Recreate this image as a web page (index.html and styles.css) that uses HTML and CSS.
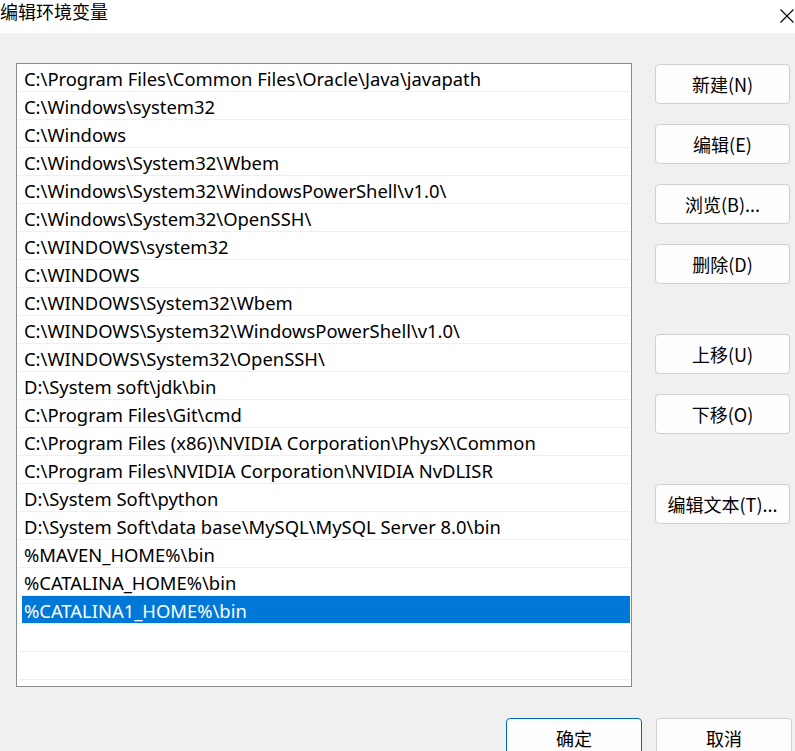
FILE: index.html
```html
<!DOCTYPE html>
<html lang="zh-CN">
<head>
    <meta charset="UTF-8">
    <title>编辑环境变量</title>
    <link rel="stylesheet" href="styles.css">
</head>
<body>
    <div class="titlebar">
        <span class="title">编辑环境变量</span>
        <span class="close">
            <svg width="14" height="14" viewBox="0 0 14 14"><path d="M0.5 0.5L13.5 13.5M13.5 0.5L0.5 13.5" stroke="#000" stroke-width="1.1" fill="none"/></svg>
        </span>
    </div>

    <div class="main">
        <!-- 路径列表 -->
        <div class="list">
            <div class="row"><div class="cell">C:\Program Files\Common Files\Oracle\Java\javapath</div></div>
            <div class="row"><div class="cell">C:\Windows\system32</div></div>
            <div class="row"><div class="cell">C:\Windows</div></div>
            <div class="row"><div class="cell">C:\Windows\System32\Wbem</div></div>
            <div class="row"><div class="cell">C:\Windows\System32\WindowsPowerShell\v1.0\</div></div>
            <div class="row"><div class="cell">C:\Windows\System32\OpenSSH\</div></div>
            <div class="row"><div class="cell">C:\WINDOWS\system32</div></div>
            <div class="row"><div class="cell">C:\WINDOWS</div></div>
            <div class="row"><div class="cell">C:\WINDOWS\System32\Wbem</div></div>
            <div class="row"><div class="cell">C:\WINDOWS\System32\WindowsPowerShell\v1.0\</div></div>
            <div class="row"><div class="cell">C:\WINDOWS\System32\OpenSSH\</div></div>
            <div class="row"><div class="cell">D:\System soft\jdk\bin</div></div>
            <div class="row"><div class="cell">C:\Program Files\Git\cmd</div></div>
            <div class="row"><div class="cell">C:\Program Files (x86)\NVIDIA Corporation\PhysX\Common</div></div>
            <div class="row"><div class="cell">C:\Program Files\NVIDIA Corporation\NVIDIA NvDLISR</div></div>
            <div class="row"><div class="cell">D:\System Soft\python</div></div>
            <div class="row"><div class="cell">D:\System Soft\data base\MySQL\MySQL Server 8.0\bin</div></div>
            <div class="row"><div class="cell">%MAVEN_HOME%\bin</div></div>
            <div class="row"><div class="cell">%CATALINA_HOME%\bin</div></div>
            <div class="row selected"><div class="cell">%CATALINA1_HOME%\bin</div></div>
            <div class="row"><div class="cell"></div></div>
            <div class="row"><div class="cell"></div></div>
        </div>

        <!-- 右侧按钮 -->
        <div class="side">
            <button class="btn">新建(N)</button>
            <button class="btn">编辑(E)</button>
            <button class="btn">浏览(B)...</button>
            <button class="btn">删除(D)</button>
            <button class="btn group">上移(U)</button>
            <button class="btn">下移(O)</button>
            <button class="btn group">编辑文本(T)...</button>
        </div>
    </div>

    <div class="footer">
        <button class="btn primary">确定</button>
        <button class="btn">取消</button>
    </div>
</body>
</html>
```

FILE: styles.css
```css
body {
    margin: 0;
    background: #f0f0f0;
    color: #000;
    font-family: "Noto Sans", "Noto Sans CJK SC", sans-serif;
    font-size: 18.4px;
    overflow: hidden;
}
.titlebar {
    height: 33px;
    background: #fff;
    display: flex;
    justify-content: space-between;
    align-items: flex-start;
}
.title {
    font-family: "Noto Sans CJK SC", sans-serif;
    font-size: 18px;
    line-height: 22px;
}
.close { padding: 3px 1px 0 0; }

.main {
    display: flex;
    padding: 30px 0 0 16px;
}
.list {
    width: 612px;
    height: 622px;
    border: 1px solid #868a91;
    background: #fff;
    padding: 0 1px;
}
.row {
    height: 27px;
    border-bottom: 1px solid #efefef;
}
.cell {
    height: 27px;
    line-height: 29px;
    margin-left: 4px;
    padding-left: 2px;
    white-space: nowrap;
}
.row.selected .cell {
    background: #0078d7;
    color: #fff;
}

.side {
    display: flex;
    flex-direction: column;
    margin-left: 23px;
    padding-top: 1px;
    gap: 20px;
}
.btn {
    width: 135px;
    height: 40px;
    background: #fdfdfd;
    border: 1px solid #d0d0d0;
    border-radius: 4px;
    font-family: "Noto Sans CJK SC", sans-serif;
    font-size: 18px;
    color: #000;
    padding: 0;
}
.side .group { margin-top: 30px; }

.footer {
    display: flex;
    gap: 14px;
    padding: 31px 0 0 506px;
}
.footer .btn {
    width: 136px;
    line-height: 36px;
}
.btn.primary { border-color: #0067c0; }
```
